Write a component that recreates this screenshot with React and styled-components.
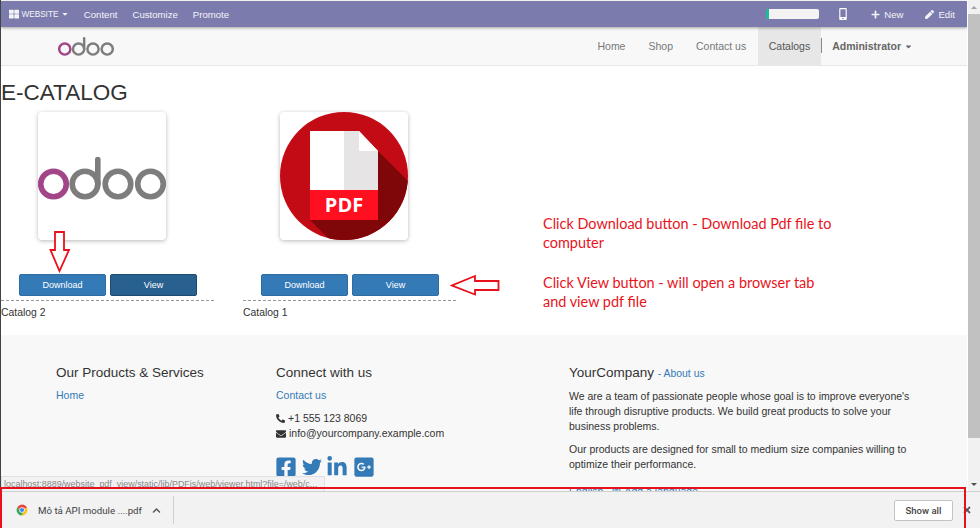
import React from "react"
import styled, { createGlobalStyle } from "styled-components"
import {
  FaCaretDown,
  FaChevronUp,
  FaEnvelope,
  FaFacebookSquare,
  FaGlobe,
  FaGooglePlusSquare,
  FaLinkedinIn,
  FaMobileAlt,
  FaPen,
  FaPhoneAlt,
  FaPlus,
  FaThLarge,
  FaTimes,
  FaTwitter,
} from "react-icons/fa"

const GlobalStyle = createGlobalStyle`
  html, body { margin: 0; padding: 0; background: #fff; }
  body { font-family: "Liberation Sans", Arial, sans-serif; color: #333; }
`

const Screen = styled.div`
  position: relative;
  width: 980px;
  height: 528px;
  overflow: hidden;
  display: flex;
  flex-direction: column;
`

const Viewport = styled.div`
  height: 491px;
  display: flex;
  flex: none;
  border-left: 1px solid #3f4447;
`

const Page = styled.div`
  flex: 1;
  min-width: 0;
  overflow: hidden;
`

/* odoo edit bar */
const Toolbar = styled.div`
  height: 26px;
  margin-top: 1px;
  background: #7c7bad;
  box-shadow: 0 1px 3px rgba(0, 0, 0, 0.35);
  position: relative;
  display: flex;
  align-items: center;
  justify-content: space-between;
  padding: 0 12px 0 8px;
  color: #fff;
  font-size: 9.6px;
`

const ToolGroup = styled.div`
  display: flex;
  align-items: center;
  gap: ${(p) => p.$gap || 15}px;
`

const ToolItem = styled.span`
  display: inline-flex;
  align-items: center;
  gap: ${(p) => p.$gap || 4}px;
  color: #f4f4f8;
  font-size: ${(p) => p.$size || 9.6}px;
`

const Progress = styled.div`
  width: 53px;
  height: 10px;
  margin-right: -4px;
  background: #f3f3f3;
  border-radius: 2px;
  border-left: 3px solid #1abc9c;
  box-sizing: border-box;
`

/* site navbar */
const Navbar = styled.div`
  height: 38px;
  background: #f8f8f8;
  border-bottom: 1px solid #e7e7e7;
  display: flex;
  justify-content: space-between;
  padding: 0 54px 0 57px;
`

const LogoSlot = styled.div`
  display: flex;
  align-items: center;
  padding-bottom: 1px;
`

const NavLinks = styled.div`
  display: flex;
  align-items: stretch;
  font-size: 10.5px;
  color: #777;
`

const NavLink = styled.a`
  display: flex;
  align-items: center;
  padding: 0 ${(p) => (p.$active ? 11 : 11.5)}px;
  color: ${(p) => (p.$active ? "#555" : "#777")};
  background: ${(p) => (p.$active ? "#e7e7e7" : "transparent")};
`

const NavUser = styled.a`
  display: flex;
  align-items: center;
  gap: 3px;
  padding-left: 11px;
  color: #666;
  font-weight: bold;
  position: relative;

  &::before {
    content: "";
    position: absolute;
    left: 0;
    top: 11px;
    height: 15px;
    border-left: 1px solid #888;
  }
`

const Main = styled.div`
  height: 269px;
  background: #fff;
`

const Title = styled.h1`
  margin: 0;
  padding-top: 14px;
  height: 32px;
  font-size: 22.5px;
  line-height: 26px;
  font-weight: normal;
  color: #333;
`

const CatalogRow = styled.div`
  display: flex;
  gap: 29px;
`

const Catalog = styled.div`
  width: 213px;
  display: flex;
  flex-direction: column;
  align-items: stretch;
`

const Thumb = styled.div`
  width: 128px;
  height: 128px;
  margin-left: 37px;
  background: #fff;
  border-radius: 4px;
  box-shadow: 0 1px 4px rgba(0, 0, 0, 0.28);
  display: flex;
  align-items: center;
`

const Actions = styled.div`
  display: flex;
  gap: 4px;
  margin: 34px 0 0 18px;
`

const ActionButton = styled.a`
  width: 87px;
  height: 22px;
  box-sizing: border-box;
  display: flex;
  align-items: center;
  justify-content: center;
  font-size: 9px;
  color: #fff;
  border-radius: 2px;
  background: ${(p) => (p.$pressed ? "#286090" : "#337ab7")};
  border: 1px solid ${(p) => (p.$pressed ? "#1f4a70" : "#2e6da4")};
`

const CatalogName = styled.div`
  margin-top: 4px;
  border-top: 1px dashed #999;
  padding-top: 5px;
  font-size: 10.4px;
  line-height: 13px;
`

/* footer */
const Footer = styled.div`
  height: 156px;
  background: #f8f8f8;
  padding: 30px 0 0 55px;
  display: grid;
  grid-template-columns: 220px 293px 345px;
  font-size: 10.5px;
  line-height: 15px;
`

const FootTitle = styled.h4`
  margin: 0 0 7px;
  font-size: 13.5px;
  line-height: 16px;
  font-weight: normal;
  color: #333;
`

const FootLink = styled.a`
  color: #337ab7;
`

const Small = styled.span`
  font-size: 10.4px;
`

const ContactList = styled.div`
  margin-top: 8px;
`

const ContactLine = styled.div`
  display: flex;
  align-items: center;
  gap: 3px;
`

const Socials = styled.div`
  margin: 15px 0 0 -1px;
  display: flex;
  align-items: center;
  gap: 4.5px;
  color: #337ab7;
  font-size: 22px;
`

const BirdIcon = styled(FaTwitter)`
  font-size: 20px;
`

const Para = styled.p`
  margin: 0 0 8px;
`

const Langs = styled.div`
  margin-top: 12px;
  display: flex;
  gap: 9px;
`

const LangAdd = styled.a`
  color: #337ab7;
  display: inline-flex;
  align-items: center;
  gap: 3px;
`

/* browser chrome */
const Scrollbar = styled.div`
  width: 12px;
  margin-left: 1px;
  flex: none;
  background: #f1f1f1;
  display: flex;
  flex-direction: column;
  align-items: center;
`

const ScrollArrow = styled.div`
  height: 14px;
  flex: none;
  display: flex;
  align-items: center;
  justify-content: center;

  &::after {
    content: "";
    border-left: 3px solid transparent;
    border-right: 3px solid transparent;
    ${(p) => (p.$up ? "border-bottom: 3px solid #a3a3a3;" : "border-top: 3px solid #505050;")}
  }
`

const ScrollThumb = styled.div`
  width: 100%;
  height: 424px;
  flex: none;
  background: #c1c1c1;
`

const ScrollSpace = styled.div`
  flex: 1;
`

const DownloadBar = styled.div`
  flex: 1;
  background: #f2f2f2;
  border-top: 1px solid #cfcfcf;
  display: flex;
  align-items: center;
  padding: 0 8px 0 16px;
  position: relative;
`

const FileItem = styled.div`
  display: flex;
  align-items: center;
  gap: 10px;
  width: 157px;
  height: 28px;
  border-right: 1px solid #cfcfcf;
  font-family: Roboto, sans-serif;
  font-size: 9.7px;
  color: #3c4043;
`

const ChevronSlot = styled.span`
  display: inline-flex;
  font-size: 9px;
  color: #555;
`

const BarSpacer = styled.div`
  flex: 1;
`

const ShowAll = styled.button`
  width: 59px;
  height: 21px;
  padding: 0;
  background: #fff;
  border: 1px solid #c4c4c4;
  border-radius: 2px;
  font-family: Roboto, sans-serif;
  font-size: 9.5px;
  font-weight: 500;
  color: #444;
`

const CloseSlot = styled.span`
  margin-left: 9px;
  display: inline-flex;
  font-size: 10px;
  color: #555;
`

/* things lying over the page */
const StatusTip = styled.div`
  position: absolute;
  left: 1px;
  top: 476px;
  width: 324px;
  height: 15px;
  box-sizing: border-box;
  background: #f2f2f2;
  border: 1px solid #e0e0e0;
  border-bottom: 0;
  padding-left: 2px;
  font-size: 8.95px;
  line-height: 15px;
  color: #888;
  white-space: nowrap;
  overflow: hidden;
`

const RedFrame = styled.div`
  position: absolute;
  left: 0;
  top: 487px;
  width: 966px;
  height: 60px;
  box-sizing: border-box;
  border: 2px solid #e8111b;
  pointer-events: none;
`

const Note = styled.div`
  position: absolute;
  left: 543px;
  top: 214px;
  width: 298px;
  font-family: Lato, sans-serif;
  font-size: 14.45px;
  line-height: 19px;
  color: #e8141c;
`

const NoteGap = styled.p`
  margin: 0 0 21px;
`

const ArrowMark = styled.svg`
  position: absolute;
  left: ${(p) => p.$x}px;
  top: ${(p) => p.$y}px;
`

function OdooLogo({ width }) {
  return (
    <svg width={width} viewBox="0 0 128 48" style={{ display: "block" }}>
      <g fill="none" strokeWidth="5.6">
        <circle cx="15.5" cy="32" r="12.8" stroke="#a24689" />
        <circle cx="47" cy="32" r="12.8" stroke="#7d7d7d" />
        <circle cx="80" cy="32" r="12.8" stroke="#7d7d7d" />
        <circle cx="112.5" cy="32" r="12.8" stroke="#7d7d7d" />
        <path d="M59.8 32V7.5" stroke="#7d7d7d" strokeLinecap="round" />
      </g>
    </svg>
  )
}

function PdfBadge() {
  return (
    <svg width="128" height="128" viewBox="0 0 128 128" style={{ display: "block" }}>
      <defs>
        <clipPath id="disc">
          <circle cx="64" cy="64" r="64" />
        </clipPath>
      </defs>
      <circle cx="64" cy="64" r="64" fill="#c30b15" />
      <path d="M98 39 L130 71 V130 H52 L30 108 Z" fill="#800709" clipPath="url(#disc)" />
      <path d="M30 19 H64 V78 H30 Z" fill="#fff" />
      <path d="M64 19 H79 L98 39 V78 H64 Z" fill="#e6e4e4" />
      <path d="M79 19 V39 H98 Z" fill="#fff" />
      <rect x="30" y="78" width="68" height="30" fill="#ff0f20" />
      <text
        x="64"
        y="100"
        textAnchor="middle"
        fill="#fff"
        fontFamily="'Open Sans', sans-serif"
        fontWeight="700"
        fontSize="20"
      >
        PDF
      </text>
    </svg>
  )
}

function ChromeMark() {
  return (
    <svg width="12" height="12" viewBox="0 0 24 24" style={{ display: "block", flex: "none" }}>
      <path d="M12 12 L12 1 A11 11 0 0 1 22 8 Z" fill="#e8453c" />
      <path d="M12 1 A11 11 0 0 0 3 6 L8 15 L12 12 Z" fill="#e8453c" />
      <path d="M3 6 A11 11 0 0 0 11 23 L16 15 L12 12 L8 15 Z" fill="#34a853" />
      <path d="M22 8 A11 11 0 0 1 11 23 L16 15 L12 8 Z" fill="#fbc116" />
      <circle cx="12" cy="12" r="5.4" fill="#fff" />
      <circle cx="12" cy="12" r="4.2" fill="#4285f4" />
    </svg>
  )
}

function CatalogCard({ name, pressed, children }) {
  return (
    <Catalog>
      <Thumb>{children}</Thumb>
      <Actions>
        <ActionButton>Download</ActionButton>
        <ActionButton $pressed={pressed}>View</ActionButton>
      </Actions>
      <CatalogName>{name}</CatalogName>
    </Catalog>
  )
}

export default function App() {
  return (
    <Screen>
      <GlobalStyle />
      <Viewport>
        <Page>
          <Toolbar>
            <ToolGroup>
              <ToolItem $gap={2.5} $size={8.2}>
                <FaThLarge size={10} /> WEBSITE <FaCaretDown size={8} />
              </ToolItem>
              <ToolItem>Content</ToolItem>
              <ToolItem>Customize</ToolItem>
              <ToolItem>Promote</ToolItem>
            </ToolGroup>
            <ToolGroup $gap={22}>
              <Progress />
              <FaMobileAlt size={12} />
              <ToolItem>
                <FaPlus size={9} /> New
              </ToolItem>
              <ToolItem>
                <FaPen size={9} /> Edit
              </ToolItem>
            </ToolGroup>
          </Toolbar>
          <Navbar>
            <LogoSlot>
              <OdooLogo width={56} />
            </LogoSlot>
            <NavLinks>
              <NavLink>Home</NavLink>
              <NavLink>Shop</NavLink>
              <NavLink>Contact us</NavLink>
              <NavLink $active>Catalogs</NavLink>
              <NavUser>
                Administrator <FaCaretDown size={9} />
              </NavUser>
            </NavLinks>
          </Navbar>
          <Main>
            <Title>E-CATALOG</Title>
            <CatalogRow>
              <CatalogCard name="Catalog 2" pressed>
                <OdooLogo width={128} />
              </CatalogCard>
              <CatalogCard name="Catalog 1">
                <PdfBadge />
              </CatalogCard>
            </CatalogRow>
          </Main>
          <Footer>
            <div>
              <FootTitle>Our Products &amp; Services</FootTitle>
              <FootLink>Home</FootLink>
            </div>
            <div>
              <FootTitle>Connect with us</FootTitle>
              <FootLink>Contact us</FootLink>
              <ContactList>
                <ContactLine>
                  <FaPhoneAlt size={9} /> +1 555 123 8069
                </ContactLine>
                <ContactLine>
                  <FaEnvelope size={10} /> info@yourcompany.example.com
                </ContactLine>
              </ContactList>
              <Socials>
                <FaFacebookSquare />
                <BirdIcon />
                <FaLinkedinIn />
                <FaGooglePlusSquare />
              </Socials>
            </div>
            <div>
              <FootTitle>
                YourCompany <FootLink as="span"><Small>- About us</Small></FootLink>
              </FootTitle>
              <Para>
                We are a team of passionate people whose goal is to improve everyone's life through
                disruptive products. We build great products to solve your business problems.
              </Para>
              <Para>
                Our products are designed for small to medium size companies willing to optimize
                their performance.
              </Para>
              <Langs>
                <FootLink>English</FootLink>
                <LangAdd>
                  <FaGlobe size={9} /> Add a language
                </LangAdd>
              </Langs>
            </div>
          </Footer>
        </Page>
        <Scrollbar>
          <ScrollArrow $up />
          <ScrollThumb />
          <ScrollSpace />
          <ScrollArrow />
        </Scrollbar>
      </Viewport>
      <DownloadBar>
        <FileItem>
          <ChromeMark />
          <span>Mô tả API module ....pdf</span>
          <ChevronSlot>
            <FaChevronUp />
          </ChevronSlot>
        </FileItem>
        <BarSpacer />
        <ShowAll>Show all</ShowAll>
        <CloseSlot>
          <FaTimes />
        </CloseSlot>
      </DownloadBar>

      <StatusTip>localhost:8889/website_pdf_view/static/lib/PDFjs/web/viewer.html?file=/web/c...</StatusTip>
      <RedFrame />
      <Note>
        <NoteGap>Click Download button - Download Pdf file to computer</NoteGap>
        <NoteGap>Click View button - will open a browser tab and view pdf file</NoteGap>
      </Note>
      <ArrowMark $x={49} $y={230} width="22" height="44" viewBox="0 0 22 44">
        <path d="M6 2 H15 V20 H20 L10.5 41 L1.5 20 H6 Z" fill="#fff" stroke="#e8111b" strokeWidth="1.8" />
      </ArrowMark>
      <ArrowMark $x={450} $y={274} width="50" height="22" viewBox="0 0 50 22">
        <path d="M48.5 7 V16 H25 V20.5 L2 11.5 L25 2 V7 Z" fill="#fff" stroke="#e8111b" strokeWidth="1.8" />
      </ArrowMark>
    </Screen>
  )
}
